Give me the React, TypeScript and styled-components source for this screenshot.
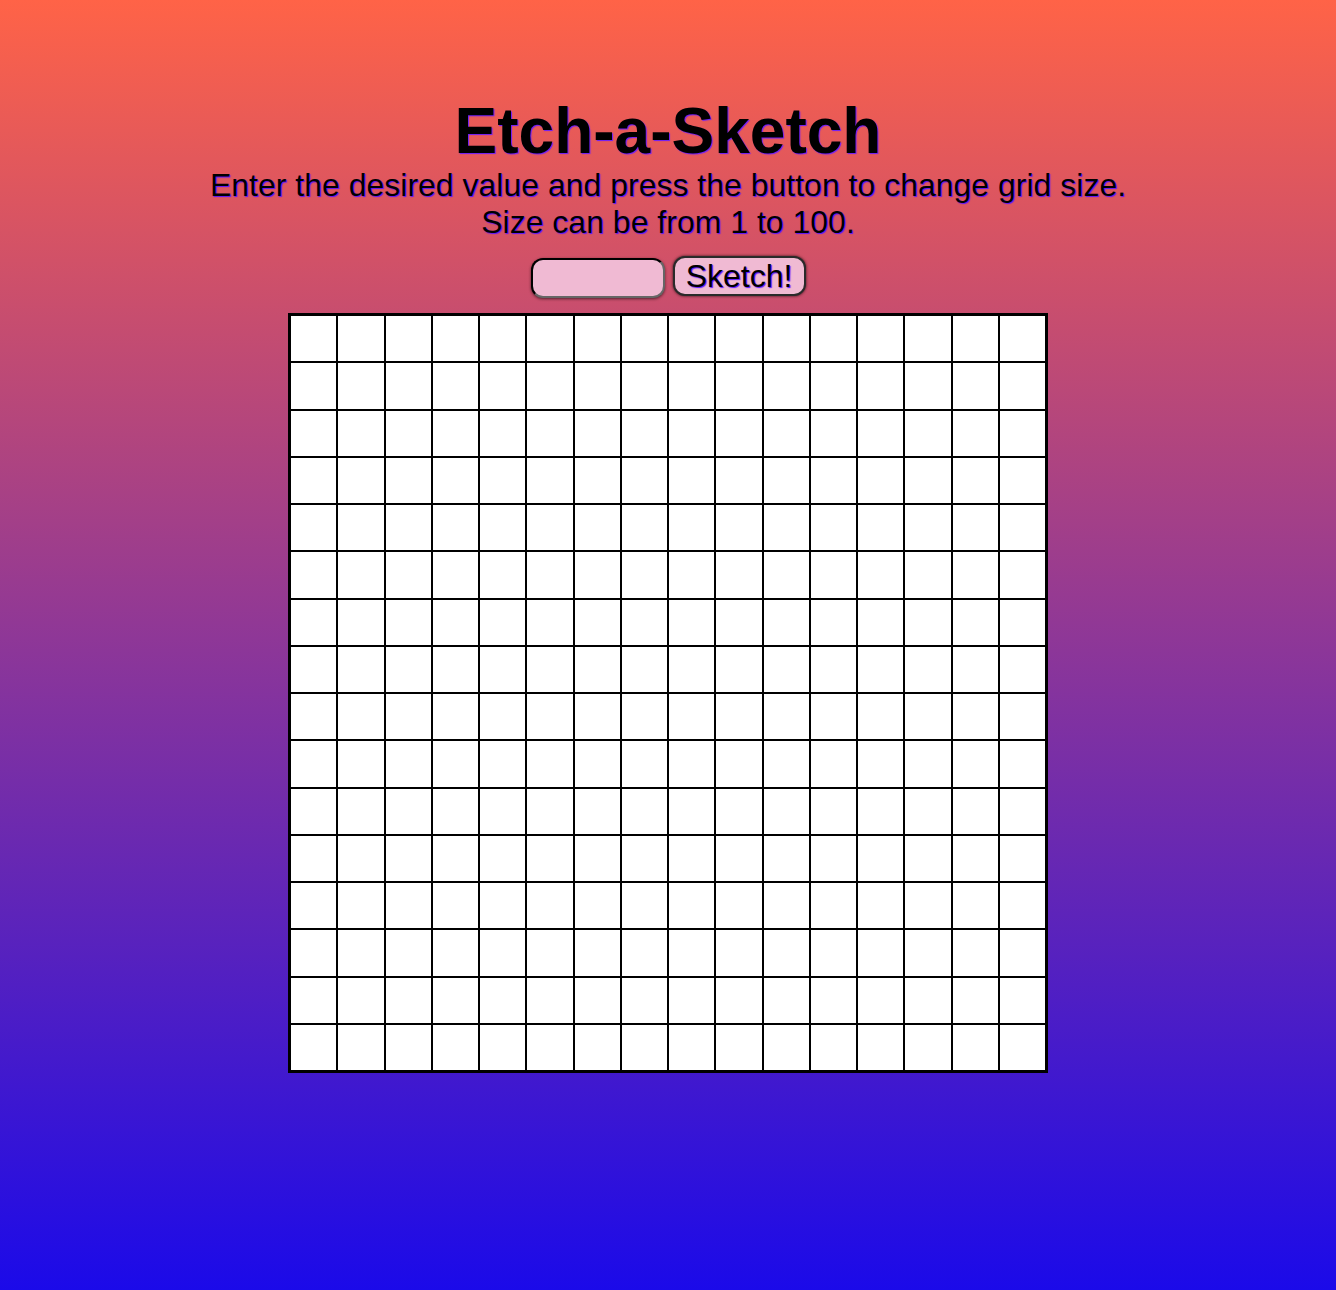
import React from "react";
import styled, { createGlobalStyle } from "styled-components";

const GlobalStyle = createGlobalStyle`
  html, body {
    margin: 0;
    padding: 0;
  }
  body {
    min-height: 1290px;
    background: linear-gradient(to bottom, #ff6347 0%, #1b0ae9 100%);
    font-family: "Liberation Sans", Arial, sans-serif;
  }
`;

const Page = styled.main`
  display: flex;
  flex-direction: column;
  align-items: center;
  padding-top: 94px;
  min-height: 1290px;
  box-sizing: border-box;
`;

const Title = styled.h1`
  margin: 0;
  font-size: 64px;
  font-weight: 700;
  color: #000;
  text-shadow: 1px 1px 1px #6a1cff;
`;

const Subtitle = styled.p`
  margin: -1px 0 0;
  font-size: 32px;
  text-align: center;
  color: #000;
  text-shadow: 1px 1px 1px #5a14ff;
`;

const Controls = styled.div`
  display: flex;
  align-items: flex-start;
  gap: 8px;
  margin-top: 15px;
`;

const SizeInput = styled.input`
  box-sizing: border-box;
  width: 134px;
  height: 40px;
  margin-top: 2px;
  border-radius: 12px;
  border: 2px inset #666;
  border-top-color: #1e1e1e;
  border-left-color: #1e1e1e;
  background: #f0bad3;
  box-shadow: 0 1px 3px rgba(0, 0, 0, 0.6);
  font-family: "Liberation Sans", Arial, sans-serif;
  font-size: 24px;
  outline: none;
`;

const SketchButton = styled.button`
  box-sizing: border-box;
  width: 133px;
  height: 40px;
  padding: 0 10px;
  border-radius: 12px;
  border: 2px solid #2a2a2a;
  background: #f0bad3;
  box-shadow: 0 0 3px rgba(0, 0, 0, 0.8);
  font-family: "Liberation Sans", Arial, sans-serif;
  font-size: 32px;
  line-height: 36px;
  color: #000;
  text-shadow: 1px 1px 1px #5a14ff;
  cursor: pointer;
`;

const Board = styled.div<{ $size: number }>`
  box-sizing: border-box;
  width: 760px;
  height: 760px;
  margin-top: 15px;
  border: 2px solid #000;
  background: #fff;
  display: grid;
  grid-template-columns: repeat(${(p) => p.$size}, 1fr);
  grid-template-rows: repeat(${(p) => p.$size}, 1fr);
`;

const Cell = styled.div`
  box-sizing: border-box;
  border: 1px solid #000;
  background: #fff;
`;

export default function App() {
  const size = 16;
  const cells = Array.from({ length: size * size }, (_, i) => i);
  return (
    <>
      <GlobalStyle />
      <Page>
        <Title>Etch-a-Sketch</Title>
        <Subtitle>
          Enter the desired value and press the button to change grid size.
          <br />
          Size can be from 1 to 100.
        </Subtitle>
        <Controls>
          <SizeInput type="text" aria-label="grid size" />
          <SketchButton>Sketch!</SketchButton>
        </Controls>
        <Board $size={size}>
          {cells.map((i) => (
            <Cell key={i} />
          ))}
        </Board>
      </Page>
    </>
  );
}
